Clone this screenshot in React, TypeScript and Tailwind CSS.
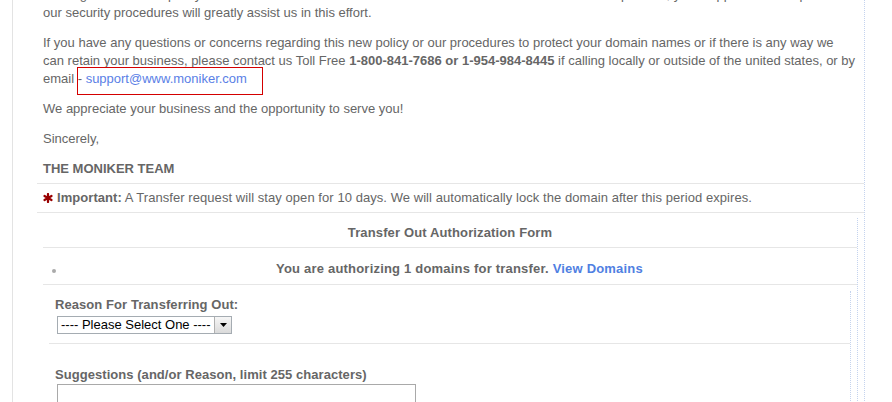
export default function App() {
  return (
    <div className="w-[892px] h-[402px] overflow-hidden bg-white font-['Liberation_Sans',Arial,sans-serif] text-[13px] leading-[18px] text-[#666]">
      <div className="ml-[12px] w-[853px] min-h-[420px] border-l border-[#e3e3e3]">
        <div className="min-h-[420px] border-r border-dotted border-[#c4d3ee]">
          <div className="-mt-[14px] pl-[30px] pr-[2px] pb-[5px] whitespace-nowrap">
            <p>
              Although this domain policy will add additional time to the transfer of domain names and the transfer process, your support and compliance with
              <br />
              our security procedures will greatly assist us in this effort.
            </p>
            <p className="mt-[12px]">
              If you have any questions or concerns regarding this new policy or our procedures to protect your domain names or if there is any way we
              <br />
              can retain your business, please contact us Toll Free <b>1-800-841-7686 or 1-954-984-8445</b> if calling locally or outside of the united states, or by
              <br />
              email - <span className="relative text-[#5a80e6]">support@www.moniker.com<span className="absolute left-[-9px] top-[-4px] w-[186px] h-[28px] border border-[#d40000]" /></span>
            </p>
            <p className="mt-[12px]">We appreciate your business and the opportunity to serve you!</p>
            <p className="mt-[12px]">Sincerely,</p>
            <p className="mt-[12px] font-bold">THE MONIKER TEAM</p>
          </div>

          <div className="ml-[24px] border-y border-[#e6e6e6] pl-[6px] pt-[5px] pb-[5px] flex items-center tracking-[0.06px]">
            <svg width="10" height="10" viewBox="0 0 10 10" className="mr-[4px] shrink-0">
              <g stroke="#990000" strokeWidth="2.2" strokeLinecap="round">
                <line x1="5" y1="1" x2="5" y2="9" />
                <line x1="1.5" y1="3" x2="8.5" y2="7" />
                <line x1="1.5" y1="7" x2="8.5" y2="3" />
              </g>
            </svg>
            <span>
              <b>Important:</b> A Transfer request will stay open for 10 days. We will automatically lock the domain after this period expires.
            </span>
          </div>

          <div className="mt-[5px] ml-[30px] mr-[6px] border-r border-dotted border-[#c4d3ee]">
            <div className="border-b border-[#e6e6e6] pt-[6px] pb-[5px] text-center font-bold tracking-[0.13px]">
              Transfer Out Authorization Form
            </div>
            <div className="border-b border-[#e6e6e6] pt-[12px] pb-[6px] pl-[9px] flex items-start">
              <div className="mt-[9px] w-[4px] h-[4px] rounded-full bg-[#aaa] shrink-0" />
              <div className="ml-[6px] flex-1 text-center font-bold tracking-[0.2px]">
                You are authorizing 1 domains for transfer. <span className="text-[#4f80e2]">View Domains</span>
              </div>
            </div>
            <div className="mt-[6px] ml-[6px] mr-[6px] min-h-[200px] border-r border-dotted border-[#c4d3ee]">
              <div className="border-b border-[#e6e6e6] pl-[6px] pt-[5px] pb-[9px]">
                <div className="font-bold tracking-[0.07px]">Reason For Transferring Out:</div>
                <div className="mt-[2px] ml-[2px] flex w-[175px] h-[18px] border border-[#a5acb2] bg-white">
                  <div className="flex-1 pl-[3px] text-black leading-[16px]">---- Please Select One ----</div>
                  <div className="w-[17px] h-[16px] border-l border-[#b0b0b0] bg-gradient-to-b from-[#f6f6f6] to-[#dadada] flex items-center justify-center">
                    <svg width="7" height="4" viewBox="0 0 7 4">
                      <path d="M0 0 H7 L3.5 4 Z" fill="#000" />
                    </svg>
                  </div>
                </div>
              </div>
              <div className="pl-[6px] pt-[22px]">
                <div className="font-bold tracking-[0.05px]">Suggestions (and/or Reason, limit 255 characters)</div>
                <textarea className="block ml-[2px] w-[359px] h-[60px] border border-[#a9a9a9] resize-none" />
              </div>
            </div>
          </div>
        </div>
      </div>
    </div>
  );
}
